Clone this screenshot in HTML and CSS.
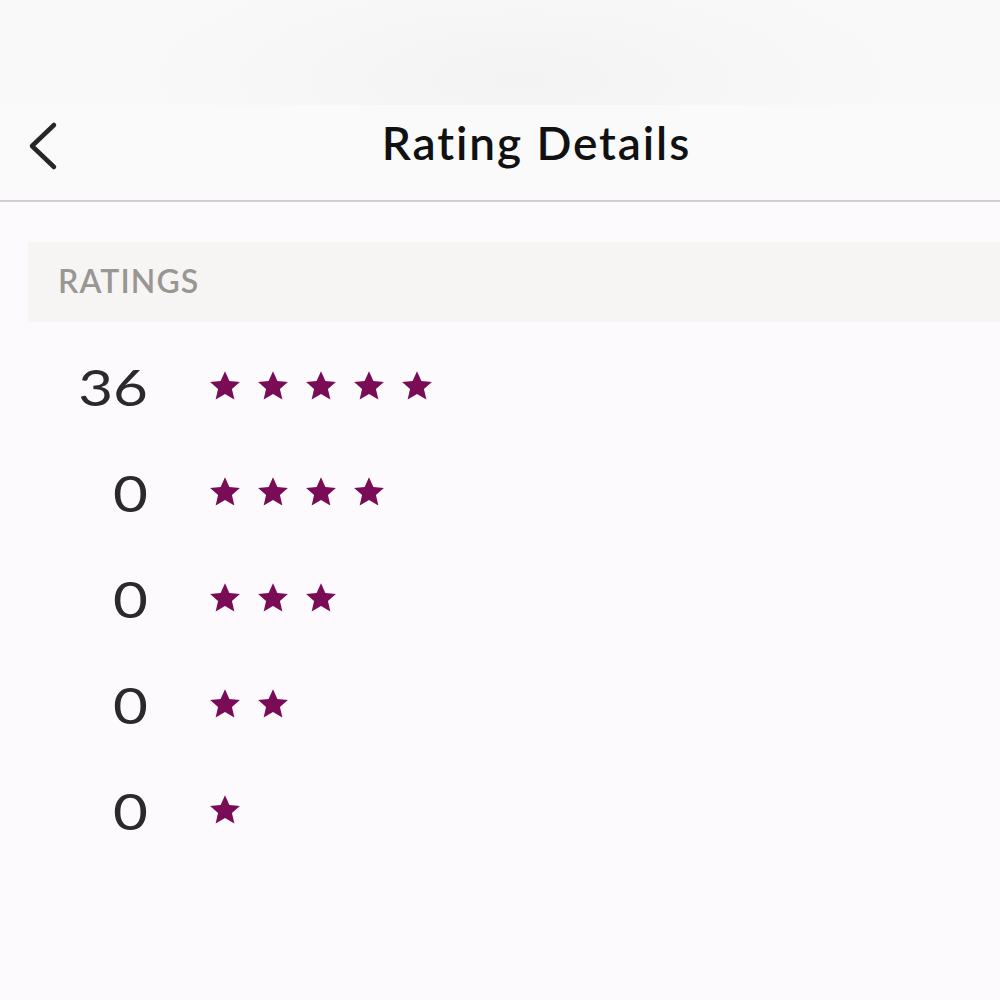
FILE: index.html
```html
<!DOCTYPE html>
<html lang="en">
<head>
<meta charset="utf-8">
<title>Rating Details</title>
<link rel="stylesheet" href="styles.css">
</head>
<body>
<div class="screen">
  <div class="status-area"></div>
  <header class="nav">
    <button class="back" aria-label="Back">
      <svg width="34" height="50" viewBox="0 0 34 50"><path d="M28 4 L6 25 L28 46" fill="none" stroke="#262626" stroke-width="4.5" stroke-linecap="round" stroke-linejoin="round"/></svg>
    </button>
    <h1 class="title">Rating Details</h1>
  </header>
  <main class="content">
    <div class="section-head">RATINGS</div>
    <ul class="ratings">
      <li class="row"><span class="count">36</span><span class="stars" data-n="5"></span></li>
      <li class="row"><span class="count">0</span><span class="stars" data-n="4"></span></li>
      <li class="row"><span class="count">0</span><span class="stars" data-n="3"></span></li>
      <li class="row"><span class="count">0</span><span class="stars" data-n="2"></span></li>
      <li class="row"><span class="count">0</span><span class="stars" data-n="1"></span></li>
    </ul>
  </main>
</div>
<script>
  // fill each rating row with its number of stars
  const star = '<svg class="star" viewBox="0 0 24 24"><path d="M12 1.6l3.1 6.9 7.4.7-5.6 5 1.7 7.4L12 17.7l-6.6 3.9 1.7-7.4-5.6-5 7.4-.7z"/></svg>';
  document.querySelectorAll('.stars').forEach(el => {
    el.innerHTML = star.repeat(+el.dataset.n);
  });
</script>
</body>
</html>
```
FILE: styles.css
```css
* { box-sizing: border-box; }
html, body { margin: 0; padding: 0; }
body {
  background: #fcfafc;
  font-family: "Lato", "Open Sans", sans-serif;
}
.screen { width: 1000px; height: 1000px; overflow: hidden; }
.status-area {
  height: 105px;
  background: radial-gradient(ellipse 40% 120% at 52% 75%, #f4f3f4 0%, #f8f7f8 60%, #faf9fa 100%);
}
.nav {
  position: relative;
  height: 97px;
  background: #fbfafb;
  border-bottom: 2px solid #cfcdcf;
  display: flex;
  align-items: center;
  justify-content: center;
}
.back {
  position: absolute;
  left: 26px;
  top: 16px;
  padding: 0;
  border: 0;
  background: none;
  display: flex;
}
.title {
  margin: -20px 0 0 73px;
  font-family: "Lato", "Open Sans", sans-serif;
  font-weight: 600;
  font-size: 46px;
  color: #111;
  letter-spacing: 1.9px;
}
.content { padding: 40px 0 0 28px; }
.section-head {
  height: 80px;
  background: #f6f5f3;
  display: flex;
  align-items: center;
  padding-left: 30px;
  font-family: "Lato", "Open Sans", sans-serif;
  font-weight: 600;
  font-size: 32px;
  letter-spacing: 1.1px;
  color: #9a9694;
  padding-bottom: 4px;
}
.ratings { list-style: none; margin: 0; padding: 11px 0 0 0; }
.row {
  height: 106px;
  display: flex;
  align-items: center;
}
.count {
  width: 120px;
  text-align: right;
  font-family: "Lato", "Open Sans", sans-serif;
  font-size: 51px;
  color: #2a2a2a;
  line-height: 1;
  transform: scaleX(1.18);
  transform-origin: right center;
}
.stars { display: flex; gap: 14px; margin-left: 60px; }
.star { width: 34px; height: 34px; fill: #7a0b57; }
```
